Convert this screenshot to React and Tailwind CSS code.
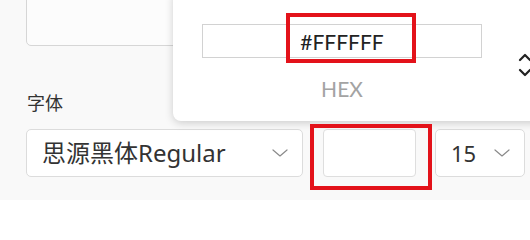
import React from "react";

const Chevron = ({ className = "" }) => (
  <svg className={className} width="16" height="8" viewBox="0 0 16 8" fill="none">
    <path d="M1 1 L8 7 L15 1" stroke="#8a8a8a" strokeWidth="1.2" strokeLinecap="round" strokeLinejoin="round" />
  </svg>
);

export default function App() {
  const font = { fontFamily: '"Noto Sans", "Noto Sans CJK SC", sans-serif' };
  return (
    <div className="relative w-[530px] h-[200px] overflow-hidden bg-[#f9f9f9]" style={font}>
      {/* left column flow */}
      <div className="flex flex-col">
        <div className="ml-[26px] mt-[-12px] h-[58px] w-[220px] rounded-[5px] border border-[#d6d6d6] bg-[#fcfcfc]" />
        <div className="ml-[27px] mt-[45px] h-[24px] text-[18px] leading-[24px] text-[#333]">字体</div>
        <div className="mt-[14px] ml-[26px] flex flex-row">
          <div className="flex h-[48px] w-[277px] items-center justify-between rounded-[5px] border border-[#dcdcdc] bg-white pl-[15px] pr-[14px]">
            <span className="text-[24px] leading-none text-[#333]">思源黑体Regular</span>
            <Chevron />
          </div>
          <div className="ml-[20px] h-[48px] w-[93px] rounded-[4px] border border-[#dedede] bg-white" />
          <div className="ml-[19px] flex h-[48px] w-[90px] items-center justify-between rounded-[5px] border border-[#dcdcdc] bg-white pl-[15px] pr-[14px]">
            <span className="text-[22px] leading-none text-[#333]">15</span>
            <Chevron />
          </div>
        </div>
      </div>

      {/* popup */}
      <div className="absolute left-[173px] top-[-10px] h-[131px] w-[400px] rounded-[8px] bg-white shadow-[0_2px_8px_rgba(0,0,0,0.18)]">
        <div className="flex flex-row items-start pl-[29px] pt-[34px]">
          <div className="flex w-[280px] flex-col items-center">
            <div className="flex h-[34px] w-[280px] items-center justify-center border border-[#d2d2d2] bg-white">
              <span className="text-[21px] leading-none text-[#222]" style={{ fontFamily: 'Lato, "Noto Sans", sans-serif' }}>#FFFFFF</span>
            </div>
            <div className="mt-[19px] text-[21px] leading-[24px] text-[#a3a3a3]" style={{ fontFamily: 'Lato, "Noto Sans", sans-serif' }}>HEX</div>
          </div>
          <svg className="ml-[36px] mt-[26px]" width="14" height="30" viewBox="0 0 14 30" fill="none">
            <path d="M2 10 L7 5 L12 10" stroke="#222" strokeWidth="2.2" strokeLinecap="round" strokeLinejoin="round" />
            <path d="M2 20 L7 25 L12 20" stroke="#222" strokeWidth="2.2" strokeLinecap="round" strokeLinejoin="round" />
          </svg>
        </div>
      </div>

      {/* red annotation boxes */}
      <div className="pointer-events-none absolute left-[286px] top-[13px] h-[50px] w-[130px] border-[4px] border-[#e3121a]" />
      <div className="pointer-events-none absolute left-[310px] top-[124px] h-[66px] w-[122px] border-[4px] border-[#e3121a]" />
    </div>
  );
}
